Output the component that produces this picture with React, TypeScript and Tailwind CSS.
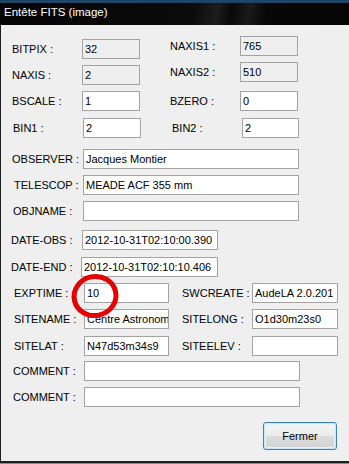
import React from "react";

type BoxProps = { w: string; value?: string; ro?: boolean; extra?: string };
const Box = ({ w, value = "", ro = false, extra = "" }: BoxProps) => (
  <div
    className={`h-[20px] shrink-0 ${w} ${extra} border border-[#a3a3a3] ${
      ro ? "bg-[#efefef]" : "bg-white"
    } pl-[2px] flex items-center overflow-hidden whitespace-nowrap text-black`}
  >
    {value}
  </div>
);

type LabelProps = { ml: string; w: string; text: string };
const Label = ({ ml, w, text }: LabelProps) => (
  <span className={`${ml} ${w} shrink-0 whitespace-nowrap text-black`}>{text}</span>
);

export default function App() {
  return (
    <div
      className="relative w-[349px] h-[464px] flex flex-col overflow-hidden bg-[#8a8a8a] text-[11px] leading-none"
      style={{ fontFamily: '"Liberation Sans", Arial, sans-serif' }}
    >
      {/* title bar */}
      <div className="h-[25px] shrink-0 flex flex-col bg-[linear-gradient(100deg,#050505_0%,#0b0b0b_55%,#1c1c1c_62%,#080808_66%,#1a1a1a_71%,#070707_76%,#050505_100%)]">
        <div className="h-[3px] bg-[#1e4466]" />
        <div className="flex-1 flex items-center pl-[4px] pb-[2px] text-white text-[11.5px]">
          Entête FITS (image)
        </div>
      </div>

      {/* client */}
      <div className="flex-1 flex flex-col bg-[#efefef] border-l border-[#1e1e1e] border-b-2 border-b-[#1e1e1e] mb-[1px]">
        {/* row 1 */}
        <div className="flex items-start mt-[11px]">
          <div className="flex items-center mt-[3px]">
            <Label ml="ml-[11px]" w="w-[70px]" text="BITPIX :" />
            <Box w="w-[58px]" value="32" ro />
          </div>
          <div className="flex items-center">
            <Label ml="ml-[30px]" w="w-[70px]" text="NAXIS1 :" />
            <Box w="w-[58px]" value="765" ro />
          </div>
        </div>
        {/* row 2 */}
        <div className="flex items-start mt-[3px]">
          <div className="flex items-center mt-[3px]">
            <Label ml="ml-[11px]" w="w-[70px]" text="NAXIS :" />
            <Box w="w-[58px]" value="2" ro />
          </div>
          <div className="flex items-center">
            <Label ml="ml-[30px]" w="w-[70px]" text="NAXIS2 :" />
            <Box w="w-[58px]" value="510" ro />
          </div>
        </div>
        {/* row 3 */}
        <div className="flex items-center mt-[6px]">
          <Label ml="ml-[11px]" w="w-[70px]" text="BSCALE :" />
          <Box w="w-[58px]" value="1" />
          <Label ml="ml-[30px]" w="w-[70px]" text="BZERO :" />
          <Box w="w-[58px]" value="0" />
        </div>
        {/* row 4 */}
        <div className="flex items-center mt-[7px]">
          <Label ml="ml-[12px]" w="w-[70px]" text="BIN1 :" />
          <Box w="w-[58px]" value="2" />
          <Label ml="ml-[31px]" w="w-[70px]" text="BIN2 :" />
          <Box w="w-[57px]" value="2" />
        </div>
        {/* row 5 */}
        <div className="flex items-center mt-[11px]">
          <Label ml="ml-[11px]" w="w-[71px]" text="OBSERVER :" />
          <Box w="w-[216px]" value="Jacques Montier" />
        </div>
        {/* row 6 */}
        <div className="flex items-center mt-[6px]">
          <Label ml="ml-[13px]" w="w-[69px]" text="TELESCOP :" />
          <Box w="w-[216px]" value="MEADE ACF 355 mm" />
        </div>
        {/* row 7 */}
        <div className="flex items-center mt-[6px]">
          <Label ml="ml-[12px]" w="w-[70px]" text="OBJNAME :" />
          <Box w="w-[216px]" />
        </div>
        {/* row 8 */}
        <div className="flex items-center mt-[9px]">
          <Label ml="ml-[10px]" w="w-[71px]" text="DATE-OBS :" />
          <Box w="w-[136px]" value="2012-10-31T02:10:00.390" />
        </div>
        {/* row 9 */}
        <div className="flex items-center mt-[7px]">
          <Label ml="ml-[10px]" w="w-[70px]" text="DATE-END :" />
          <Box w="w-[137px]" value="2012-10-31T02:10:10.406" />
        </div>
        {/* row 10 */}
        <div className="flex items-center mt-[6px]">
          <Label ml="ml-[13px]" w="w-[70px]" text="EXPTIME :" />
          <Box w="w-[85px]" value="10" />
          <Label ml="ml-[13px]" w="w-[70px]" text="SWCREATE :" />
          <Box w="w-[86px]" value="AudeLA 2.0.201" />
        </div>
        {/* row 11 */}
        <div className="flex items-center mt-[6px]">
          <Label ml="ml-[13px]" w="w-[70px]" text="SITENAME :" />
          <Box w="w-[85px]" value="Centre Astronom" />
          <Label ml="ml-[13px]" w="w-[70px]" text="SITELONG :" />
          <Box w="w-[86px]" value="O1d30m23s0" />
        </div>
        {/* row 12 */}
        <div className="flex items-center mt-[7px]">
          <Label ml="ml-[13px]" w="w-[70px]" text="SITELAT :" />
          <Box w="w-[85px]" value="N47d53m34s9" />
          <Label ml="ml-[13px]" w="w-[70px]" text="SITEELEV :" />
          <Box w="w-[86px]" />
        </div>
        {/* row 13 */}
        <div className="flex items-center mt-[5px]">
          <Label ml="ml-[12px]" w="w-[71px]" text="COMMENT :" />
          <Box w="w-[216px]" />
        </div>
        {/* row 14 */}
        <div className="flex items-center mt-[6px]">
          <Label ml="ml-[12px]" w="w-[71px]" text="COMMENT :" />
          <Box w="w-[216px]" />
        </div>
        {/* button */}
        <div className="flex mt-[15px]">
          <button className="ml-[262px] w-[74px] h-[28px] rounded-[3px] border border-[#3c7fb1] shadow-[inset_0_0_0_1px_#c4e8f8,inset_0_0_0_2px_#e6f5fc] bg-[linear-gradient(#f4f4f4_0%,#ececec_48%,#dcdcdc_52%,#d2d2d2_100%)] text-black text-[11px] flex items-center justify-center">
            Fermer
          </button>
        </div>
      </div>

      {/* red circle annotation */}
      <svg
        className="absolute left-[70px] top-[272px] pointer-events-none"
        width="52"
        height="48"
        viewBox="0 0 52 48"
      >
        <ellipse
          cx="25"
          cy="24"
          rx="21"
          ry="19.5"
          transform="rotate(-12 25 24)"
          fill="none"
          stroke="#e60000"
          strokeWidth="5"
        />
      </svg>
    </div>
  );
}
